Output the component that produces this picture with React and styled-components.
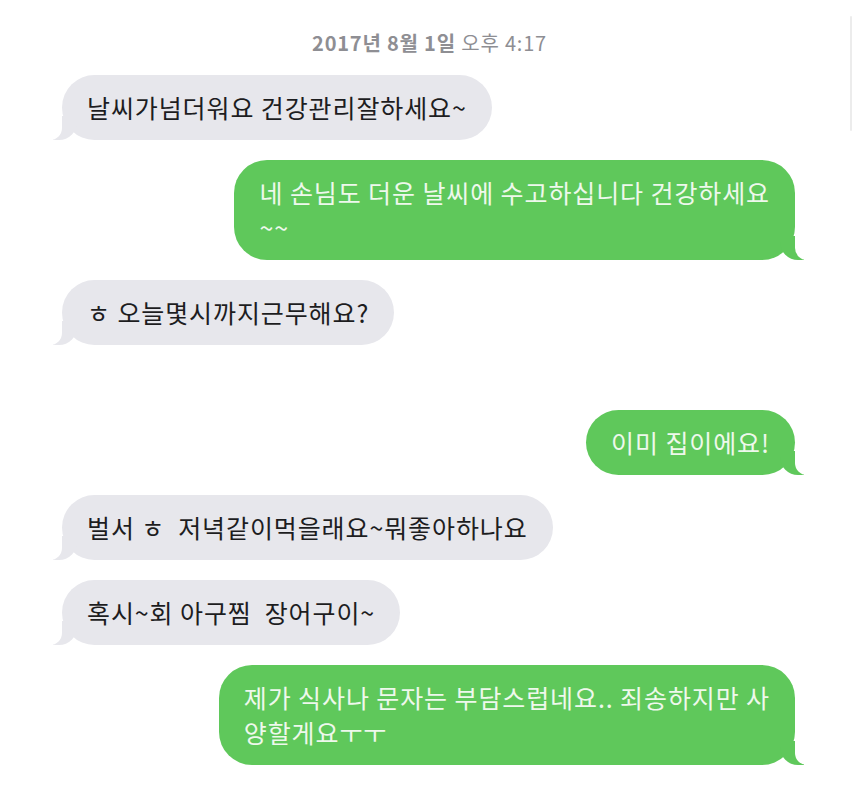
import React from "react";
import styled, { createGlobalStyle } from "styled-components";

const GlobalStyle = createGlobalStyle`
  html, body {
    margin: 0;
    padding: 0;
    background: #ffffff;
  }
  body {
    font-family: "Noto Sans CJK KR", "Noto Sans", sans-serif;
  }
`;

const messages = [
  { from: "them", lines: ["날씨가넘더워요 건강관리잘하세요~"] },
  { from: "me", lines: ["네 손님도 더운 날씨에 수고하십니다 건강하세요", "~~"] },
  { from: "them", lines: ["ㅎ 오늘몇시까지근무해요?"] },
  { from: "me", lines: ["이미 집이에요!"], spaced: true },
  { from: "them", lines: ["벌서 ㅎ  저녁같이먹을래요~뭐좋아하나요"] },
  { from: "them", lines: ["혹시~회 아구찜  장어구이~"] },
  {
    from: "me",
    lines: ["제가 식사나 문자는 부담스럽네요.. 죄송하지만 사", "양할게요ㅜㅜ"],
  },
];

function App() {
  return (
    <>
      <GlobalStyle />
      <Screen>
        <ScrollIndicator />
        <Timestamp>
          <strong>2017년 8월 1일</strong> 오후 4:17
        </Timestamp>
        <Thread>
          {messages.map((m, i) => (
            <Bubble key={i} mine={m.from === "me"} spaced={m.spaced}>
              {m.lines.map((line, j) => (
                <Line key={j}>{line}</Line>
              ))}
            </Bubble>
          ))}
        </Thread>
      </Screen>
    </>
  );
}

const Screen = styled.div`
  position: relative;
  width: 854px;
  height: 803px;
  box-sizing: border-box;
  padding: 30px 59px 0 62px;
  overflow: hidden;
  background: #ffffff;
`;

const ScrollIndicator = styled.div`
  position: absolute;
  top: 16px;
  right: 2px;
  width: 2px;
  height: 115px;
  border-radius: 1px;
  background: #ececec;
`;

const Timestamp = styled.div`
  text-align: center;
  font-size: 20px;
  line-height: 26px;
  letter-spacing: 0.8px;
  color: #8e8e93;
  margin-left: 2px;
  strong {
    font-weight: 600;
  }
`;

const Thread = styled.div`
  display: flex;
  flex-direction: column;
  gap: 20px;
  margin-top: 19px;
`;

const Bubble = styled.div`
  position: relative;
  align-self: ${({ mine }) => (mine ? "flex-end" : "flex-start")};
  margin-top: ${({ spaced }) => (spaced ? "45px" : "0")};
  padding: 15px 25px;
  border-radius: 33px;
  font-size: 25px;
  line-height: 35px;
  letter-spacing: 0.9px;
  background: ${({ mine }) => (mine ? "#5fc85b" : "#e7e7ec")};
  color: ${({ mine }) => (mine ? "#eef8ec" : "#1d1d1f")};
  z-index: 0;

  &::before {
    content: "";
    position: absolute;
    bottom: 0;
    height: 24px;
    width: 24px;
    z-index: -1;
    background: ${({ mine }) => (mine ? "#5fc85b" : "#e7e7ec")};
    ${({ mine }) =>
      mine
        ? "right: -9px; border-bottom-left-radius: 18px;"
        : "left: -9px; border-bottom-right-radius: 18px;"}
  }

  &::after {
    content: "";
    position: absolute;
    bottom: 0;
    width: 12px;
    height: 26px;
    z-index: -1;
    background: #ffffff;
    ${({ mine }) =>
      mine
        ? "right: -12px; border-bottom-left-radius: 12px;"
        : "left: -12px; border-bottom-right-radius: 12px;"}
  }
`;

const Line = styled.div`
  white-space: pre;
`;

export default App;
